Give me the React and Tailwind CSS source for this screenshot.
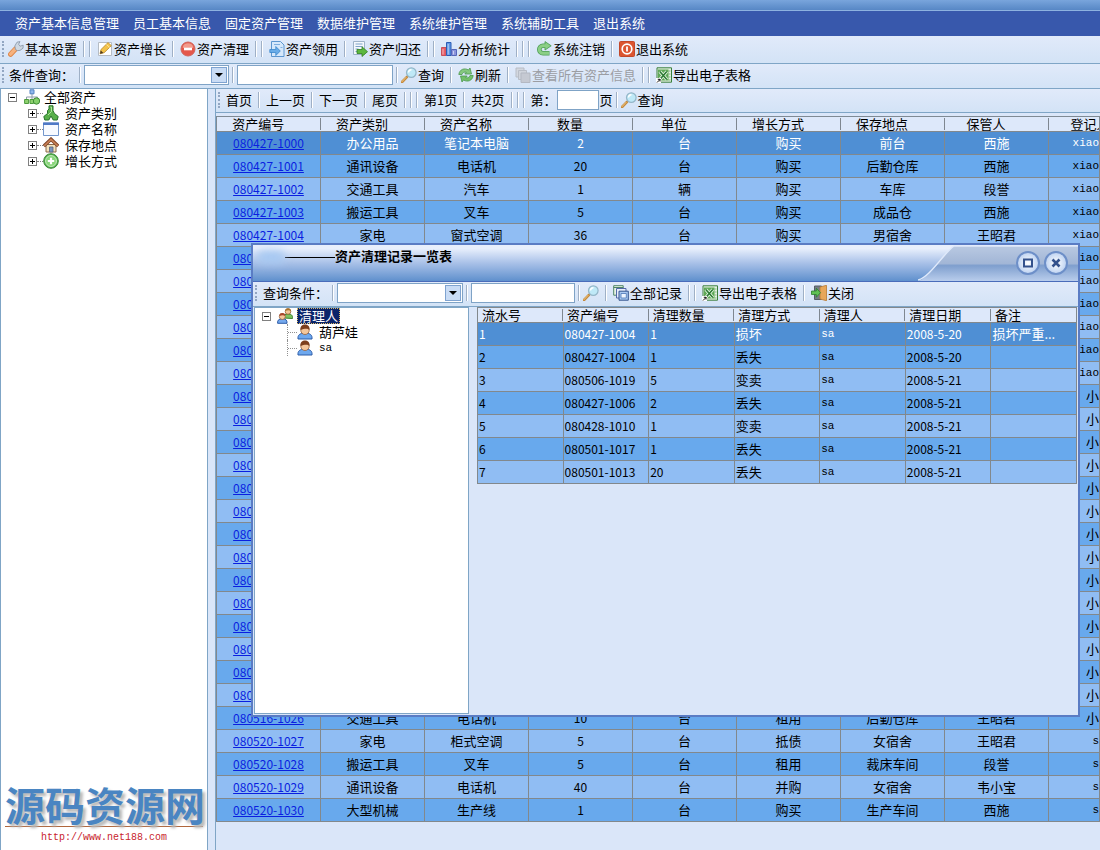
import { useState } from 'react'
import clsx from 'clsx'

const menus = ['资产基本信息管理', '员工基本信息', '固定资产管理', '数据维护管理', '系统维护管理', '系统辅助工具', '退出系统']

const columns = ['资产编号', '资产类别', '资产名称', '数量', '单位', '增长方式', '保存地点', '保管人', '登记人']

const idOnly = (ids, user) => ids.map((id) => [id, '', '', '', '', '', '', '', user])

const assets = [
  ['080427-1000', '办公用品', '笔记本电脑', '2', '台', '购买', '前台', '西施', 'xiao'],
  ['080427-1001', '通讯设备', '电话机', '20', '台', '购买', '后勤仓库', '西施', 'xiao'],
  ['080427-1002', '交通工具', '汽车', '1', '辆', '购买', '车库', '段誉', 'xiao'],
  ['080427-1003', '搬运工具', '叉车', '5', '台', '购买', '成品仓', '西施', 'xiao'],
  ['080427-1004', '家电', '窗式空调', '36', '台', '购买', '男宿舍', '王昭君', 'xiao'],
  ...idOnly(['080427-1005', '080427-1006', '080427-1007', '080427-1008', '080428-1009', '080428-1010'], 'xiao'),
  ...idOnly(
    [
      '080428-1011', '080501-1012', '080501-1013', '080501-1014', '080501-1015', '080501-1016', '080501-1017',
      '080506-1019', '080506-1020', '080506-1021', '080506-1022', '080506-1023', '080506-1024', '080506-1025',
    ],
    '小',
  ),
  ['080516-1026', '交通工具', '电话机', '10', '台', '租用', '后勤仓库', '王昭君', '小'],
  ['080520-1027', '家电', '柜式空调', '5', '台', '抵债', '女宿舍', '王昭君', 's'],
  ['080520-1028', '搬运工具', '叉车', '5', '台', '租用', '裁床车间', '段誉', 's'],
  ['080520-1029', '通讯设备', '电话机', '40', '台', '并购', '女宿舍', '韦小宝', 's'],
  ['080520-1030', '大型机械', '生产线', '1', '台', '购买', '生产车间', '西施', 's'],
]

const recordColumns = ['流水号', '资产编号', '清理数量', '清理方式', '清理人', '清理日期', '备注']

const records = [
  ['1', '080427-1004', '1', '损坏', 'sa', '2008-5-20', '损坏严重...'],
  ['2', '080427-1004', '1', '丢失', 'sa', '2008-5-20', ''],
  ['3', '080506-1019', '5', '变卖', 'sa', '2008-5-21', ''],
  ['4', '080427-1006', '2', '丢失', 'sa', '2008-5-21', ''],
  ['5', '080428-1010', '1', '变卖', 'sa', '2008-5-21', ''],
  ['6', '080501-1017', '1', '丢失', 'sa', '2008-5-21', ''],
  ['7', '080501-1013', '20', '丢失', 'sa', '2008-5-21', ''],
]

function Svg({ children }) {
  return (
    <svg viewBox="0 0 16 16" className="w-4 h-4 shrink-0" fill="none" aria-hidden="true">
      {children}
    </svg>
  )
}

const icons = {
  wrench: (
    <Svg>
      <path d="M2.600 13.300 7.500 8" stroke="#dd8344" strokeWidth="5" strokeLinecap="round" />
      <path d="M2.600 13.100 7.300 8" stroke="#f6b27e" strokeWidth="3.400" strokeLinecap="round" />
      <path d="M7.500 8.500 6.800 5 9 1.200 12 .6 10.600 3.200 12 5.200 15.200 4.200 15 7.200 12 9.400 9.400 9.600z" fill="#cfd8e2" stroke="#8392a5" strokeWidth=".8" />
    </Svg>
  ),
  edit: (
    <Svg>
      <path d="M1.500 1.500h13v13h-13z" fill="#fff" stroke="#b5bcc5" />
      <path d="m3 12.800 1-4.300L11 1.600l3.400 3.100-7.200 7z" fill="#f3c24a" stroke="#b98a30" strokeWidth=".8" />
      <path d="m3 12.800.8-3.300 2.500 2.500z" fill="#4c3a22" />
      <path d="m9.500 3.500 3.200 3" stroke="#fbe59a" />
    </Svg>
  ),
  minus: (
    <Svg>
      <circle cx="8" cy="8" r="7" fill="#e4574b" stroke="#d0655c" />
      <path d="M2.500 6.500a5.700 5.700 0 0 1 11 0C10.500 8 5.500 8 2.500 6.500z" fill="#f29b8d" />
      <path d="M4 8h8" stroke="#fff" strokeWidth="2.600" />
    </Svg>
  ),
  receive: (
    <Svg>
      <path d="M2.500 .5h9l3.500 3.500v11.500H2.500z" fill="#d5e8fb" stroke="#5c96cf" />
      <path d="M.8 8.500h6V5.500l4.500 4.500-4.500 4.500v-3h-6z" fill="#69ace8" stroke="#3a86cc" strokeWidth=".8" />
      <path d="M5 3.500h6M11.500 6.500h2" stroke="#7eaee0" />
    </Svg>
  ),
  giveBack: (
    <Svg>
      <path d="M1.500 .5h11v13h-11z" fill="#f4f8fd" stroke="#9db2c8" />
      <path d="M3.500 3h7M3.500 5.500h7M3.500 8h3M3.500 10.500h2" stroke="#7fa2c8" />
      <path d="M5 8.500h5V5.800l5.500 4.900-5.500 4.800v-3H5z" fill="#5cb83f" stroke="#2f7d1e" strokeWidth=".8" />
    </Svg>
  ),
  chart: (
    <Svg>
      <path d="M.5 6.500h4.500v8H.5z" fill="#e8606a" stroke="#c8505a" />
      <path d="M5.500 1.500h4.500v13H5.500z" fill="#5f97e6" stroke="#2c5cb4" />
      <path d="M10.500 8.500h5v6h-5z" fill="#8b94dc" stroke="#5566b8" />
      <path d="M2 8v5.500M7.200 3v10.500M12.500 10v3.500" stroke="#fff" strokeOpacity=".55" />
    </Svg>
  ),
  undo: (
    <Svg>
      <path d="M13.500 12.200H7A3.700 3.700 0 0 1 7 4.800h3" stroke="#4f9e58" strokeWidth="4.600" />
      <path d="M9 .6 15.200 4.800 9 9z" fill="#8bcf85" stroke="#4f9e58" strokeWidth=".9" />
      <path d="M13 12.200H7A3.700 3.700 0 0 1 7 4.800h4" stroke="#8bcf85" strokeWidth="3" />
    </Svg>
  ),
  power: (
    <Svg>
      <rect x=".5" y=".5" width="15" height="15" rx="1" fill="#dc5530" stroke="#c2482a" />
      <circle cx="8" cy="8" r="4.800" stroke="#fff" strokeWidth="1.700" />
      <path d="M8 5.500v5" stroke="#fff" strokeWidth="1.800" />
    </Svg>
  ),
  search: (
    <Svg>
      <path d="M1 15 6 9.800" stroke="#c58a3c" strokeWidth="2.600" strokeLinecap="round" />
      <path d="M1 14.600 5 10.400" stroke="#f0c987" strokeWidth="1" strokeLinecap="round" />
      <circle cx="10.300" cy="5.600" r="4.800" fill="#bfe9f7" stroke="#94b6c8" strokeWidth="1.200" />
      <path d="M7.500 5.500a3 3 0 0 1 3-2.800" stroke="#fff" strokeWidth="1.400" />
    </Svg>
  ),
  refresh: (
    <Svg>
      <path d="M.8 7.500C1.500 2.200 6.500.6 10.500 3L12 1l1.500 6H6.800l1.500-1.700C6.200 4.700 4.800 5.500 4 7.500z" fill="#85c87e" stroke="#4b984e" strokeWidth=".8" />
      <path d="M15.200 8.500C14.500 13.800 9.500 15.400 5.500 13L4 15 2.500 9h6.700l-1.500 1.700c2.100.6 3.500-.2 4.300-2.200z" fill="#74c069" stroke="#4b984e" strokeWidth=".8" />
    </Svg>
  ),
  copies: (
    <Svg>
      <path d="M1 1h8v9H1z" fill="#d3d7df" stroke="#b8bdc6" />
      <path d="M3.500 3.500h8v9h-8z" fill="#d0d4dc" stroke="#b8bdc6" />
      <path d="M6 6h9v9.500H6z" fill="#c5c9d2" stroke="#b3b8c2" />
    </Svg>
  ),
  excel: (
    <Svg>
      <path d="M1 .8h14.500v14.400H1z" fill="#e3f0df" stroke="#3a7f3d" />
      <path d="M12.500 4h2M12.500 7h2M12.500 10h2M12.500 13h2" stroke="#86b783" />
      <path d="M2 2.500h10.500v11H2z" fill="#5fa857" />
      <path d="m3.800 4.500 7 8M10.800 4.500l-7 8" stroke="#e9f6e6" strokeWidth="3.400" />
      <path d="m3.800 4.500 7 8M10.800 4.500l-7 8" stroke="#2c7a34" strokeWidth="1.600" />
      <path d="M0 11h5v5H0z" fill="#fff" />
      <path d="M1 15.500 4 12.500M4 12v2.500M4 12.300H1.800" stroke="#111" />
    </Svg>
  ),
  windows: (
    <Svg>
      <path d="M.7.7h9.500v9.500H.7z" fill="#eaf4e6" stroke="#4f8468" />
      <path d="M.7 2.500h9.500" stroke="#4f8468" />
      <path d="M3.500 3.500h9.500v9.500H3.500z" fill="#e8eefb" stroke="#5468a8" />
      <path d="M6 6.200h9.300v9H6z" fill="#a9c8f0" stroke="#34548f" />
      <path d="M8 8.500h5.300v4.500H8z" fill="#edf5ff" stroke="#4a76b6" strokeWidth=".8" />
    </Svg>
  ),
  exit: (
    <Svg>
      <path d="M3.500 1h7v13.500h-7z" fill="#747c86" stroke="#555d66" />
      <path d="M9 2 15.500.3v15.400L9 14z" fill="#e8a75a" stroke="#b87a34" strokeWidth=".8" />
      <path d="M.5 6h4.800V3.200l4.200 4.500-4.200 4.500V9.500H.5z" fill="#5fc053" stroke="#2b7f2c" strokeWidth=".8" />
    </Svg>
  ),
  orgChart: (
    <Svg>
      <path d="M8 4v4M2.500 11V8h11v3M8 8v3" stroke="#8f9bab" />
      <path d="M6 .8h4v4H6z" fill="#8fb7ec" stroke="#5582c2" />
      <path d="M.6 10.500h4v4h-4zM6 10.500h3.500v4H6z" fill="#8ed06f" stroke="#4c9a3c" />
      <circle cx="12.500" cy="12" r="3.200" fill="#85cf6b" stroke="#3f8c35" />
    </Svg>
  ),
  category: (
    <Svg>
      <path d="M6 .8h4v5l1.500 2.700 3.700 3-1 3.500h-4L8 11l-2.200 4h-4l-1-3.500 3.700-3L4.500 5.500 6 4z" fill="#58b04a" stroke="#26722a" />
      <path d="M7.300 2h1.200v4.500L5 10" stroke="#b4e5a2" />
    </Svg>
  ),
  windowBlank: (
    <Svg>
      <path d="M.5 2h15v12.500H.5z" fill="#f7faff" stroke="#7396cc" />
      <path d="M0 1.500h16v2.500H0z" fill="#4f79c6" />
    </Svg>
  ),
  house: (
    <Svg>
      <path d="M3 7.500h10V15H3z" fill="#f3e2bd" stroke="#8c6b4a" />
      <path d="M6.500 10h3.500v5H6.500z" fill="#7b94bd" stroke="#54627c" strokeWidth=".8" />
      <path d="M.8 9 8 2.200 15.200 9" stroke="#7b4226" strokeWidth="3.400" />
      <path d="M1.200 8.800 8 2.400l6.800 6.400" stroke="#c98155" strokeWidth="1.600" />
    </Svg>
  ),
  plus: (
    <Svg>
      <circle cx="8" cy="8" r="7.300" fill="#55b34c" stroke="#3a8937" />
      <circle cx="8" cy="8" r="5.500" fill="#8ad67b" stroke="#d6f3cf" strokeWidth=".8" />
      <path d="M8 4.800v6.400M4.800 8h6.400" stroke="#fff" strokeWidth="2.200" />
    </Svg>
  ),
  user: (
    <Svg>
      <path d="M1 15c-.5-4 2-6 7-6s7.500 2 7 6z" fill="#6ea8ee" stroke="#2d5ca8" />
      <circle cx="8" cy="6.300" r="4.200" fill="#f4c79c" stroke="#94603a" strokeWidth=".8" />
      <path d="M3.500 6C3 2 5.500.5 8 .5S13 2 12.500 6C10.500 4 7 4.800 3.500 6z" fill="#7c3f1c" />
    </Svg>
  ),
  users: (
    <Svg>
      <path d="M6.500 10c-.2-3 1.500-4 4.500-4s4.800 1 4.500 4.500z" fill="#7cc35e" stroke="#3d8030" />
      <circle cx="11" cy="3.500" r="2.800" fill="#f2c596" stroke="#95602f" strokeWidth=".8" />
      <path d="M8 3C8.300.8 9.800.2 11 .2s2.900.6 3 2.800c-1.800-1-3.500-.8-6 0z" fill="#a8722c" />
      <path d="M.6 15.300c-.3-3.300 1.400-4.500 4.700-4.500s5 1.200 4.700 4.500z" fill="#74a9ee" stroke="#2d5ca8" />
      <circle cx="5.300" cy="8.500" r="3" fill="#f4c79c" stroke="#94603a" strokeWidth=".8" />
      <path d="M2.300 8C2.400 5.500 4 4.900 5.300 4.900S8.200 5.500 8.300 8c-1.800-1-3.500-.8-6 0z" fill="#a8452a" />
    </Svg>
  ),
}

// tight: 输入框两侧的分隔线
function Sep({ count = 1, tight }) {
  return (
    <span className={clsx('flex gap-1 shrink-0', tight ? 'px-[3px]' : 'px-[6px]')}>
      {Array.from({ length: count }, (_, i) => (
        <span key={i} className="w-[2px] h-4 border-l border-[#9fb0c6] bg-white" />
      ))}
    </span>
  )
}

function Grip() {
  return <span className="w-[2px] h-4 mx-[2px] shrink-0 border-l-2 border-dotted border-[#92a6c2]" />
}

function ToolButton({ icon, label, title, disabled }) {
  return (
    <button
      disabled={disabled}
      aria-label={label ? undefined : title}
      className="flex items-center gap-px shrink-0 whitespace-nowrap disabled:text-[#9b9da3]"
    >
      {icon && icons[icon]}
      {label && <span>{label}</span>}
    </button>
  )
}

function Toolbar({ className, children }) {
  return (
    <div
      className={clsx(
        'flex items-center shrink-0 overflow-hidden pb-[2px] border-b border-[#7fa5c6] bg-linear-to-b from-[#e1eafa] to-[#d3e3f6]',
        className,
      )}
    >
      {children}
    </div>
  )
}

function Combo({ label, className }) {
  return (
    <span className={clsx('relative shrink-0', className)}>
      <select aria-label={label} className="block w-full h-5 appearance-none bg-white border border-[#7fa3c6] outline-none">
        <option></option>
      </select>
      <span className="absolute right-[2px] top-[2px] w-4 h-4 flex items-center justify-center bg-[#c9dcf5] border border-[#7fa3d0] pointer-events-none">
        <span className="border-x-4 border-t-4 border-x-transparent border-t-black" />
      </span>
    </span>
  )
}

function TextBox({ label, className }) {
  return (
    <input
      type="text"
      aria-label={label}
      className={clsx('h-5 px-1 shrink-0 bg-white border border-[#7fa3c6] outline-none', className)}
    />
  )
}

function Toggle({ open, onClick, label }) {
  return (
    <button
      onClick={onClick}
      aria-label={label}
      className="w-[9px] h-[9px] shrink-0 flex items-center justify-center border border-[#808080] bg-white"
    >
      <svg viewBox="0 0 5 5" className="w-[5px] h-[5px]" stroke="#000" aria-hidden="true">
        <path d={open ? 'M0 2.500h5' : 'M0 2.500h5M2.500 0v5'} />
      </svg>
    </button>
  )
}

function AssetTree() {
  const [open, setOpen] = useState(true)
  const nodes = [
    ['category', '资产类别'],
    ['windowBlank', '资产名称'],
    ['house', '保存地点'],
    ['plus', '增长方式'],
  ]
  return (
    <ul className="pl-[7px] leading-4">
      <li>
        <div className="flex items-center gap-1">
          <Toggle open={open} onClick={() => setOpen(!open)} label="全部资产" />
          <span className="flex items-center gap-1 pl-[3px]">
            {icons.orgChart}
            全部资产
          </span>
        </div>
        {open && (
          <ul className="pl-5">
            {nodes.map(([icon, label]) => (
              <li key={label} className="flex items-center">
                <Toggle label={label} />
                <span className="w-[6px] border-t border-dotted border-[#808080]" />
                {icons[icon]}
                <span className="pl-[6px]">{label}</span>
              </li>
            ))}
          </ul>
        )}
      </li>
    </ul>
  )
}

// 表格行颜色: 选中行 / 奇偶行
function rowClass(index, selected) {
  if (index === selected) return 'bg-[#4f8fd4] text-white'
  return index % 2 ? 'bg-[#68a9ed]' : 'bg-[#90bdf3]'
}

function AssetTable() {
  const [selected, setSelected] = useState(0)
  return (
    <table className="w-full min-w-[884px] table-fixed border-collapse border border-[#7f8a94]">
      <colgroup>
        {columns.slice(0, -1).map((name) => (
          <col key={name} className="w-[104px]" />
        ))}
        <col />
      </colgroup>
      <thead>
        <tr className="bg-[#dde8fa]">
          {columns.map((name, i) => (
            <th key={name} className={clsx('p-0 font-normal leading-[14px] overflow-hidden whitespace-nowrap', i === 8 && 'pl-[22px] text-left')}>
              <span className="flex items-center">
                <span className={clsx('flex-1', i < 8 && 'pr-5')}>{name}</span>
                {i < 8 && <span className="w-px h-3 bg-[#7f8790]" />}
              </span>
            </th>
          ))}
        </tr>
      </thead>
      <tbody>
        {assets.map((row, index) => (
          <tr key={row[0]} onClick={() => setSelected(index)} className={clsx('h-[23px]', rowClass(index, selected))}>
            {row.map((value, i) => (
              <td
                key={i}
                className={clsx(
                  'p-0 border border-[#82888c] overflow-hidden whitespace-nowrap leading-4',
                  i === 8 ? 'text-right' : 'text-center',
                  i === 3 && 'text-xs',
                  i === 8 && value !== '小' && 'font-["Liberation_Mono",monospace] text-[11px]',
                )}
              >
                {i === 0 ? (
                  <a href="#asset" className="text-xs text-[#0a1fe0] underline">
                    {value}
                  </a>
                ) : (
                  value
                )}
              </td>
            ))}
          </tr>
        ))}
      </tbody>
    </table>
  )
}

function RecordTable() {
  const [selected, setSelected] = useState(0)
  return (
    <table className="w-full table-fixed border-collapse border border-[#82888c]">
      <thead>
        <tr className="bg-[#dde8fa]">
          {recordColumns.map((name, i) => (
            <th key={name} className="p-0 font-normal text-left leading-[14px] whitespace-nowrap">
              <span className="flex items-center pl-1">
                <span className="flex-1">{name}</span>
                {i < 6 && <span className="w-px h-3 bg-[#7f8790]" />}
              </span>
            </th>
          ))}
        </tr>
      </thead>
      <tbody>
        {records.map((row, index) => (
          <tr key={row[0]} onClick={() => setSelected(index)} className={clsx('h-[23px]', rowClass(index, selected))}>
            {row.map((value, i) => (
              <td
                key={i}
                className={clsx(
                  'p-0 pl-px border border-[#82888c] overflow-hidden whitespace-nowrap leading-4',
                  [0, 1, 2, 5].includes(i) && 'text-xs',
                  i === 4 && 'font-["Liberation_Mono",monospace] text-[11px]',
                )}
              >
                {value}
              </td>
            ))}
          </tr>
        ))}
      </tbody>
    </table>
  )
}

function WindowButton({ label, children }) {
  return (
    <button
      aria-label={label}
      className="w-6 h-6 flex items-center justify-center rounded-full border-2 border-[#6d8fc8] bg-radial from-white to-[#a9c4ec]"
    >
      <svg viewBox="0 0 12 12" className="w-3 h-3" fill="none" stroke="#33518c" aria-hidden="true">
        {children}
      </svg>
    </button>
  )
}

function CleanupDialog() {
  return (
    <div
      role="dialog"
      aria-label="资产清理记录一览表"
      className="absolute left-[251px] right-5 top-[243px] h-[474px] flex flex-col border-2 border-[#5a7cc4] bg-[#dae6f9]"
    >
      <div className="relative h-9 shrink-0 flex justify-between bg-linear-to-b from-[#e8effc] from-10% via-[#a9c1e8] via-50% to-[#5f90cd]">
        <div className="flex items-center h-6 pl-1">
          <span className="w-7 h-3 bg-[#a5c8f2] rounded-full blur-xs" />
          <span className="w-[50px] h-px bg-black" />
          <h2 className="font-bold font-['Liberation_Serif','Noto_Sans_CJK_SC',serif]">资产清理记录一览表</h2>
        </div>
        <svg viewBox="0 0 160 37" preserveAspectRatio="none" className="absolute right-0 top-0 w-40 h-full" aria-hidden="true">
          <defs>
            <linearGradient id="tab" x1="0" y1="0" x2="0" y2="1">
              <stop offset="0" stopColor="#b9c9e2" />
              <stop offset=".5" stopColor="#a2b6d6" />
              <stop offset=".56" stopColor="#7f9fce" />
              <stop offset="1" stopColor="#b9cdec" />
            </linearGradient>
          </defs>
          <path d="M0 37C12 34 26 8 36 1h124v36z" fill="url(#tab)" />
          <path d="M0 36C12 33 26 8 36 1h124" fill="none" stroke="#dfe9fa" strokeWidth="1.500" />
        </svg>
        <div className="relative flex items-center gap-1 pr-[10px]">
          <WindowButton label="最大化">
            <rect x="2" y="2.500" width="8" height="7" strokeWidth="2" />
          </WindowButton>
          <WindowButton label="关闭窗口">
            <path d="m2.500 2.500 7 7M9.500 2.500l-7 7" strokeWidth="2.600" />
          </WindowButton>
        </div>
      </div>
      <Toolbar className="h-[26px] border-t border-t-[#4a6cba]">
        <Grip />
        <span className="w-[70px] pl-1 shrink-0">查询条件：</span>
        <Sep tight />
        <Combo label="查询条件" className="w-[126px]" />
        <Sep tight />
        <TextBox label="查询内容" className="w-[104px]" />
        <Sep tight />
        <ToolButton icon="search" title="查询" />
        <Sep />
        <ToolButton icon="windows" label="全部记录" />
        <Sep count={2} />
        <ToolButton icon="excel" label="导出电子表格" />
        <Sep />
        <ToolButton icon="exit" label="关闭" />
      </Toolbar>
      <div className="flex flex-1 gap-2 px-px pb-px min-h-0">
        <div className="w-[215px] shrink-0 bg-white border border-[#7fa5c6] leading-4">
          <div className="flex items-center pl-[7px]">
            <Toggle open label="清理人" />
            <span className="pl-[6px]">{icons.users}</span>
            <span className="ml-1 px-[2px] bg-[#0a246a] text-white outline-1 -outline-offset-1 outline-dotted outline-[#d8b868]">清理人</span>
          </div>
          <ul className="ml-8">
            {['葫芦娃', 'sa'].map((name) => (
              <li key={name} className="flex items-center">
                <span className="w-[10px] h-4 flex items-center border-l border-dotted border-[#909090]">
                  <span className="w-full border-t border-dotted border-[#909090]" />
                </span>
                {icons.user}
                <span className={clsx('pl-[6px]', name === 'sa' && 'font-["Liberation_Mono",monospace] text-[11px]')}>{name}</span>
              </li>
            ))}
          </ul>
        </div>
        <div className="flex-1 min-w-0">
          <RecordTable />
        </div>
      </div>
    </div>
  )
}

export default function App() {
  return (
    <div className="relative min-h-screen flex flex-col overflow-hidden bg-[#dae6f9] text-black text-[13px] leading-4 font-['Noto_Sans_CJK_SC',sans-serif]">
      <div className="h-[11px] shrink-0 border-b border-[#8db2e0] bg-linear-to-b from-[#79a5dc] to-[#5787c5]" />
      <nav className="h-[25px] shrink-0 flex items-center gap-[14px] px-[15px] pb-[2px] bg-[#3858ac] text-white">
        {menus.map((name) => (
          <a key={name} href="#menu" className="whitespace-nowrap">
            {name}
          </a>
        ))}
      </nav>

      <Toolbar className="h-7">
        <Grip />
        <span className="w-[2px] shrink-0" />
        <ToolButton icon="wrench" label="基本设置" />
        <Sep count={2} />
        <ToolButton icon="edit" label="资产增长" />
        <Sep />
        <ToolButton icon="minus" label="资产清理" />
        <Sep count={2} />
        <ToolButton icon="receive" label="资产领用" />
        <Sep />
        <ToolButton icon="giveBack" label="资产归还" />
        <Sep count={2} />
        <ToolButton icon="chart" label="分析统计" />
        <Sep count={3} />
        <ToolButton icon="undo" label="系统注销" />
        <Sep />
        <ToolButton icon="power" label="退出系统" />
      </Toolbar>

      <Toolbar className="h-[25px]">
        <Grip />
        <span className="w-[70px] pl-[3px] shrink-0">条件查询：</span>
        <Sep tight />
        <Combo label="条件查询" className="w-[145px]" />
        <Sep tight />
        <TextBox label="查询内容" className="w-[156px]" />
        <Sep tight />
        <ToolButton icon="search" label="查询" />
        <Sep />
        <ToolButton icon="refresh" label="刷新" />
        <Sep />
        <ToolButton icon="copies" label="查看所有资产信息" disabled />
        <Sep count={2} />
        <ToolButton icon="excel" label="导出电子表格" />
      </Toolbar>

      <div className="flex flex-1">
        <aside className="w-[208px] shrink-0 flex flex-col justify-between bg-white border-x border-[#7fa5c6]">
          <AssetTree />
          <div className="px-1 pb-1 text-center">
            <p className="text-[40px] leading-[44px] font-bold text-[#4a85c2] whitespace-nowrap border-b border-[#b0663c] [text-shadow:3px_3px_3px_#b8b8b8]">
              源码资源网
            </p>
            <a href="#site" className="font-['Liberation_Mono',monospace] text-[10px] text-[#c8242c]">
              http://www.net188.com
            </a>
          </div>
        </aside>

        <main className="flex-1 min-w-0 ml-[7px] border-l border-[#7fa5c6] overflow-hidden">
          <Toolbar className="h-6">
            <Grip />
            <span className="w-1 shrink-0" />
            <ToolButton label="首页" />
            <Sep />
            <ToolButton label="上一页" />
            <Sep />
            <ToolButton label="下一页" />
            <Sep />
            <ToolButton label="尾页" />
            <Sep count={3} />
            <span className="shrink-0">第1页</span>
            <Sep />
            <span className="shrink-0">共2页</span>
            <Sep count={3} />
            <label htmlFor="page" className="shrink-0">第：</label>
            <input id="page" type="text" className="w-[42px] h-5 px-1 mr-px shrink-0 bg-white border border-[#7fa3c6] outline-none" />
            <span className="shrink-0">页</span>
            <Sep tight />
            <ToolButton icon="search" label="查询" />
          </Toolbar>
          <div className="pt-[3px]">
            <AssetTable />
          </div>
        </main>
      </div>

      <CleanupDialog />
    </div>
  )
}
